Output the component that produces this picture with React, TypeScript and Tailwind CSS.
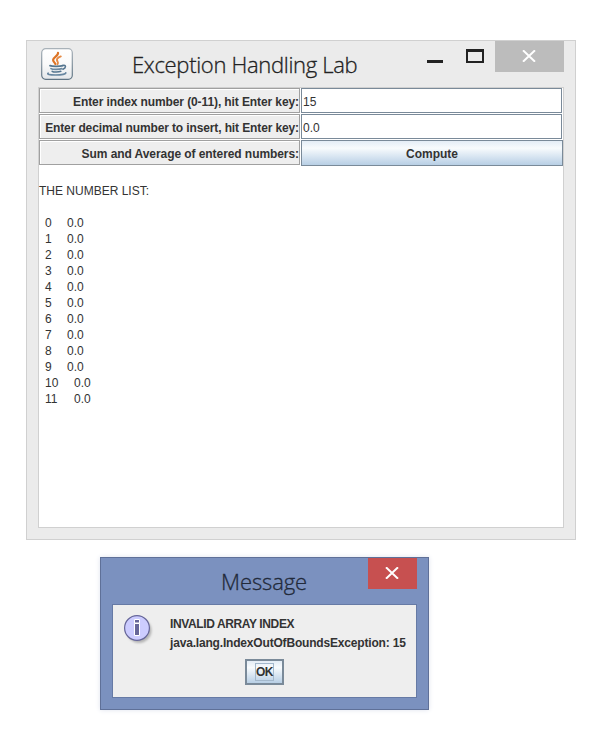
import React from "react";

const numbers = Array.from({ length: 12 }, (_, i) => i);

function JavaIcon() {
  return (
    <svg width="32" height="32" viewBox="0 0 32 32" className="block">
      <defs>
        <linearGradient id="tile" x1="0" y1="0" x2="0" y2="1">
          <stop offset="0" stopColor="#ffffff" />
          <stop offset="0.5" stopColor="#fafafa" />
          <stop offset="1" stopColor="#e4e7ea" />
        </linearGradient>
        <linearGradient id="rim" x1="0" y1="0" x2="0" y2="1">
          <stop offset="0" stopColor="#a9b2b9" />
          <stop offset="1" stopColor="#5f7484" />
        </linearGradient>
      </defs>
      <rect x="0.7" y="0.7" width="30.6" height="30.6" rx="4" fill="url(#tile)" stroke="url(#rim)" strokeWidth="1.2" />
      <g fill="none" strokeLinecap="round">
        <path d="M17 4.8c.8 3-5 4.3-4.9 7.2.1 1.8 1.6 2.4 2.3 4" stroke="#dd7426" strokeWidth="2.2" />
        <path d="M19.8 8.4c-2.6 1-4.2 2.2-3.8 3.9.3 1.4 1.9 2 .5 3.9" stroke="#e58a45" strokeWidth="1.9" />
        <path d="M9 17.6c2 .9 10 .9 12.8 0" stroke="#56778f" strokeWidth="1.8" />
        <path d="M10 20.6c1.2.9 8.2 1 10.8 0" stroke="#6d8aa1" strokeWidth="1.7" />
        <path d="M11.2 23.3c1.2.9 6.4 1 8.6 0" stroke="#55758f" strokeWidth="1.6" />
        <path d="M21.8 17.4c3.6-.8 3.5 2.6.2 3.9" stroke="#55758f" strokeWidth="1.5" />
        <path d="M7.2 25.2c-1.6 1.1.9 1.8 7.3 1.8 6.7 0 10.4-.9 10.3-2.2" stroke="#6786a0" strokeWidth="1.6" />
      </g>
    </svg>
  );
}

function InfoIcon() {
  return (
    <svg width="32" height="32" viewBox="0 0 32 32" className="block">
      <defs>
        <filter id="soft" x="-20%" y="-20%" width="150%" height="150%">
          <feGaussianBlur stdDeviation="1.3" />
        </filter>
      </defs>
      <circle cx="15" cy="15.5" r="12.5" fill="#b4b4b4" filter="url(#soft)" />
      <circle cx="13" cy="13" r="12.4" fill="#ccccff" stroke="#666699" strokeWidth="1.2" />
      <path d="M10.5 4.5h5v3.5h-5zM10.5 8.5h5v12h-5z" fill="#666699" stroke="#fff" strokeWidth="1" />
    </svg>
  );
}

function CloseMark() {
  return (
    <svg width="14" height="12" viewBox="0 0 14 12" className="mr-[2px] mt-[-1px] block">
      <path d="M1 0.3 L13 11.7 M13 0.3 L1 11.7" stroke="#fff" strokeWidth="2" />
    </svg>
  );
}

function Row({ label, spacing, children }: { label: string; spacing: string; children: React.ReactNode }) {
  return (
    <div className="flex h-[26px]">
      <div className="h-[25px] w-[261px] border border-[#a0a0a0] bg-[#eeeeee] shadow-[inset_1px_1px_0_#fff,0_1px_0_#fff,1px_0_0_#fff]">
        <div className={"flex h-[23px] items-center justify-end whitespace-nowrap pt-[2px] text-[12px] font-bold " + spacing}>{label}</div>
      </div>
      <div className="ml-px flex-1">{children}</div>
    </div>
  );
}

function Field({ value }: { value: string }) {
  return (
    <div className="flex h-[25px] w-[261px] items-center border border-[#7a8a99] bg-white pl-px pt-[2px] text-[12px]">{value}</div>
  );
}

export default function App() {
  return (
    <div className="h-[730px] w-[598px] overflow-hidden bg-white pl-[26px] pt-10 font-['Liberation_Sans',sans-serif] text-[#333333]">
      <section className="flex h-[500px] w-[550px] flex-col border border-[#d0d0d0] bg-[#ebebeb] px-[11px]">
        <header className="flex h-[46px]">
          <div className="ml-[3px] mt-[7px]">
            <JavaIcon />
          </div>
          <h1 className="ml-[59px] mt-[7px] w-[267px] whitespace-nowrap font-['Open_Sans',sans-serif] text-[22px] font-light leading-[32px] tracking-[-0.32px] text-[#222] [-webkit-text-stroke:0.3px_#222]">
            Exception Handling Lab
          </h1>
          <div className="ml-[28px] mt-[19px] h-[3px] w-4 bg-[#222]" />
          <div className="ml-[23px] mt-[8px] h-[14px] w-[18px] border-x-2 border-b-2 border-t-[3px] border-[#222]" />
          <div className="ml-[11px] flex h-[31px] w-[69px] shrink-0 items-center justify-center bg-[#bcbcbc]">
            <CloseMark />
          </div>
        </header>
        <main className="h-[441px] w-[526px] border border-[#d0d0d0] bg-white">
          <Row label="Enter index number (0-11), hit Enter key:" spacing="tracking-[-0.1px]">
            <Field value="15" />
          </Row>
          <Row label="Enter decimal number to insert, hit Enter key:" spacing="tracking-[-0.12px]">
            <Field value="0.0" />
          </Row>
          <Row label="Sum and Average of entered numbers:" spacing="tracking-[-0.07px]">
            <button className="flex h-[26px] w-[262px] items-center justify-center border border-[#7a8a99] bg-linear-to-b from-[#e4edf6] via-[#f8fbfd] via-30% to-[#b8cfe5] pt-[2px] text-[12px] font-bold">
              Compute
            </button>
          </Row>
          <div className="pt-[17px] text-[12px] leading-4">
            <p>THE NUMBER LIST:</p>
            <ul className="pt-4">
              {numbers.map((n) => (
                <li key={n} className="flex pl-[6px]">
                  <span className={n > 9 ? "w-[29px]" : "w-[22px]"}>{n}</span>
                  <span>0.0</span>
                </li>
              ))}
            </ul>
          </div>
        </main>
      </section>

      <section className="ml-[74px] mt-[17px] flex h-[153px] w-[329px] flex-col border border-[#5f7098] bg-[#7b91bf] px-[11px] shadow-[0_0_5px_#dfe3ee]">
        <header className="flex h-[46px]">
          <h2 className="ml-[109px] mt-[7px] w-[147px] font-['Open_Sans',sans-serif] text-[22px] font-light leading-[32px] tracking-[-0.1px] text-[#222a3a] [-webkit-text-stroke:0.3px_#222a3a]">
            Message
          </h2>
          <div className="flex h-[31px] w-[49px] items-center justify-center bg-[#c75050]">
            <CloseMark />
          </div>
        </header>
        <div className="h-[94px] w-[305px] border border-[#667aa5] bg-[#eeeeee]">
          <div className="flex">
            <div className="ml-[11px] mt-[10px]">
              <InfoIcon />
            </div>
            <div className="ml-[14px] mt-[10px] whitespace-nowrap text-[12px] font-bold leading-[19px]">
              <p className="tracking-[-0.38px]">INVALID ARRAY INDEX</p>
              <p className="tracking-[-0.18px]">java.lang.IndexOutOfBoundsException: 15</p>
            </div>
          </div>
          <button className="ml-[132px] mt-[6px] flex h-[26px] w-[39px] items-center justify-center border-2 border-[#7a8a99] bg-linear-to-b from-[#e4edf6] via-[#f8fbfd] via-30% to-[#b8cfe5] text-[12px] font-bold tracking-[-0.5px]">
            <span className="flex h-[18px] w-[19px] items-center justify-center border border-[#a3b8cc]">OK</span>
          </button>
        </div>
      </section>
    </div>
  );
}
